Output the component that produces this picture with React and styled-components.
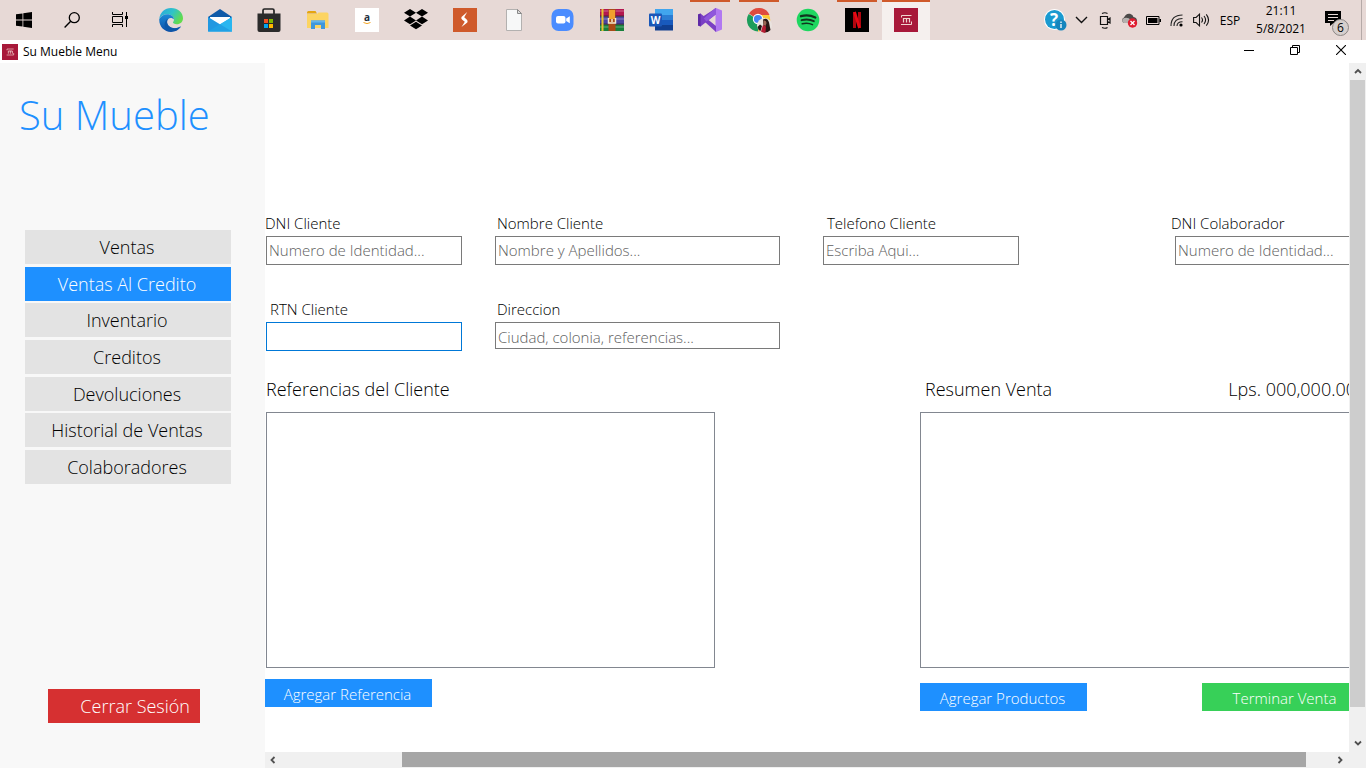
import React from 'react';
import styled, { createGlobalStyle } from 'styled-components';

const GlobalStyle = createGlobalStyle`
  *, *::before, *::after { box-sizing: border-box; }
  body {
    margin: 0;
    background: #fff;
    color: #000;
    font-family: "Open Sans", "Noto Sans", sans-serif;
  }
  button, input { font-family: inherit; }
`;

const Screen = styled.div`
  display: flex;
  flex-direction: column;
  min-height: 100vh;
  overflow: hidden;
`;

/* ---------- Taskbar ---------- */

const Taskbar = styled.header`
  display: flex;
  height: 40px;
  background: #e7d9d6;
`;

const SystemKeys = styled.div`
  display: flex;
  margin-right: 3px;
`;

const Apps = styled.nav`
  display: flex;
  gap: 1px;
`;

const barFor = {
  open: 'linear-gradient(#cf5a2b, #cf5a2b) center top / 40px 2px no-repeat',
  active: 'linear-gradient(#cf5a2b, #cf5a2b) center top / 100% 2px no-repeat, #f5f0ee',
};

const TaskButton = styled.button`
  display: flex;
  align-items: center;
  justify-content: center;
  width: 48px;
  height: 40px;
  padding: 0;
  border: 0;
  background: ${(p) => barFor[p.$state] || 'none'};
`;

const Tray = styled.div`
  display: flex;
  align-items: center;
  margin-left: auto;
`;

const TrayButton = styled.button`
  display: flex;
  align-items: center;
  justify-content: center;
  width: ${(p) => p.$width || 24}px;
  height: 40px;
  padding: 0;
  border: 0;
  background: none;
  color: #000;
  font-size: 12px;
`;

const Clock = styled.time`
  width: 68px;
  font-size: 12px;
  line-height: 18px;
  text-align: center;
`;

const Notifications = styled.button`
  position: relative;
  width: 47px;
  height: 40px;
  margin-right: 4px;
  padding: 0 0 0 10px;
  border: 0;
  border-right: 1px solid #b5aaa8;
  background: none;
  text-align: left;
`;

const Count = styled.span`
  position: absolute;
  left: 17px;
  top: 19px;
  width: 17px;
  height: 17px;
  border: 1px solid #8d8785;
  border-radius: 50%;
  background: #d6cfcd;
  color: #000;
  font-size: 12px;
  line-height: 15px;
  text-align: center;
`;

/* ---------- Window frame ---------- */

const TitleBar = styled.div`
  display: flex;
  align-items: center;
  height: 23px;
  padding: 0 2px;
  background: #fff;
`;

const WindowTitle = styled.h1`
  margin: 0 auto 0 5px;
  font-size: 12px;
  line-height: 16px;
  font-weight: 400;
`;

const WindowButton = styled.button`
  display: flex;
  align-items: center;
  justify-content: center;
  width: 46px;
  height: 19px;
  margin-bottom: 4px;
  padding: 0;
  border: 0;
  background: none;
`;

const WindowBody = styled.div`
  display: flex;
  flex: 1;
  min-width: 0;
`;

/* ---------- Sidebar ---------- */

const Sidebar = styled.aside`
  display: flex;
  flex-direction: column;
  flex: none;
  width: 265px;
  padding: 24px 34px 45px 25px;
  background: #f8f8f8;
`;

const Brand = styled.h2`
  margin: 0 0 87px -6px;
  color: #1e90ff;
  font-size: 40px;
  line-height: 56px;
  font-weight: 300;
  white-space: nowrap;
`;

const Menu = styled.nav`
  display: flex;
  flex-direction: column;
  justify-content: space-between;
  height: 254px;
`;

const MenuButton = styled.button`
  height: 34px;
  padding: 0 2px 0 0;
  border: 0;
  background: ${(p) => (p.$active ? '#1e90ff' : '#e3e3e3')};
  color: ${(p) => (p.$active ? '#fff' : '#000')};
  font-size: 18px;
  font-weight: 300;
  line-height: 34px;
`;

const LogoutButton = styled.button`
  align-self: center;
  width: 152px;
  height: 34px;
  margin-top: auto;
  margin-right: 8px;
  padding: 0 10px 0 0;
  border: 0;
  background: #d63031;
  color: #fff;
  font-size: 18px;
  font-weight: 300;
  line-height: 34px;
  text-align: right;
`;

/* ---------- Sale form ---------- */

const Pane = styled.div`
  display: flex;
  flex-direction: column;
  flex: 1;
  min-width: 0;
`;

const PaneRow = styled.div`
  display: flex;
  flex: 1;
  min-width: 0;
`;

const Viewport = styled.main`
  flex: 1;
  min-width: 0;
  padding: 149px 0 41px;
  overflow: hidden;
`;

const Form = styled.form`
  width: max-content;
`;

const FieldRow = styled.div`
  display: flex;
  height: ${(p) => p.$height}px;
`;

const Field = styled.div`
  flex: none;
  width: ${(p) => p.$width}px;
  margin-right: ${(p) => p.$gap || 0}px;
  padding-left: ${(p) => p.$inset || 0}px;
`;

const Label = styled.label`
  display: block;
  height: 24px;
  margin-left: ${(p) => p.$shift || 0}px;
  font-size: 15px;
  line-height: 23px;
  font-weight: 300;
  white-space: nowrap;
`;

const TextBox = styled.input`
  display: block;
  width: 100%;
  height: ${(p) => (p.$short ? 27 : 29)}px;
  padding: ${(p) => (p.$short ? '2px 2px 0' : '0 2px 2px')};
  border: 1px solid ${(p) => (p.$current ? '#0078d7' : '#7a7a7a')};
  border-radius: 0;
  background: #fff;
  font-size: 15px;
  font-weight: 300;
  outline: 0;
  &::placeholder { color: #606060; opacity: 1; }
`;

const Panels = styled.div`
  display: flex;
  gap: 205px;
  padding-left: 1px;
`;

const Panel = styled.section`
  width: 449px;
`;

const PanelHead = styled.div`
  display: flex;
  justify-content: space-between;
  height: 37px;
  padding: 0 ${(p) => (p.$inset ? 13 : 0)}px 0 ${(p) => (p.$inset ? 5 : 0)}px;
  font-size: 18px;
  line-height: 28px;
  font-weight: 300;
  white-space: nowrap;
`;

const PanelTitle = styled.h3`
  margin: 0;
  font: inherit;
`;

const List = styled.div`
  height: 256px;
  margin-bottom: ${(p) => p.$space}px;
  border: 1px solid #828790;
  background: #fff;
`;

const Actions = styled.div`
  display: flex;
  justify-content: space-between;
  margin-left: ${(p) => (p.$flush ? -1 : 0)}px;
`;

const ActionButton = styled.button`
  width: 167px;
  height: 28px;
  padding: 2px 2px 0 0;
  border: 0;
  background: ${(p) => (p.$done ? '#37d058' : '#1e90ff')};
  color: #fff;
  font-size: 15px;
  font-weight: 300;
  line-height: 26px;
`;

/* ---------- Scroll bars ---------- */

const ScrollV = styled.div`
  display: flex;
  flex-direction: column;
  flex: none;
  width: 17px;
  padding-left: 1px;
  background: #f0f0f0;
`;

const ScrollH = styled.div`
  display: flex;
  height: 16px;
  padding-right: 17px;
  background: #f0f0f0;
`;

const Track = styled.div`
  display: flex;
  flex: 1;
  flex-direction: ${(p) => (p.$vertical ? 'column' : 'row')};
  padding: ${(p) => (p.$vertical ? '0 1px 28px 0' : '0 26px 1px 120px')};
`;

const Thumb = styled.div`
  flex: 1;
  background: ${(p) => (p.$dark ? '#a6a6a6' : '#cdcdcd')};
`;

const ScrollButton = styled.button`
  display: flex;
  flex: none;
  align-items: center;
  justify-content: center;
  width: 17px;
  height: 17px;
  padding: 0 1px 2px 0;
  border: 0;
  background: none;
`;

/* ---------- Icons ---------- */

const Svg = ({ s = 24, w, h, children }) => (
  <svg width={w || s} height={h || s} viewBox={`0 0 ${w || s} ${h || s}`} aria-hidden="true">
    {children}
  </svg>
);

const StartIcon = () => (
  <Svg s={16}>
    <path d="M0 2.3 6.5 1.4V7.5H0zM7.3 1.3 16 0V7.5H7.3zM0 8.4H6.5V14.6L0 13.7zM7.3 8.4H16V16L7.3 14.7z" />
  </Svg>
);

const SearchIcon = () => (
  <Svg s={16}>
    <circle cx="10.3" cy="5.7" r="5" fill="none" stroke="#000" strokeWidth="1.3" />
    <path d="M6.7 9.3.6 15.4" stroke="#000" strokeWidth="1.4" />
  </Svg>
);

const TaskViewIcon = () => (
  <Svg s={16}>
    <path d="M.5 0V2.500H10.500V0M.5 15V12.500H10.500V15M.5 4.500H10.500V10.500H.5zM14.500 0V4M14.500 7V15" fill="none" stroke="#000" />
    <rect x="13" y="4" width="3" height="3" />
  </Svg>
);

const EdgeIcon = () => (
  <Svg>
    <defs>
      <linearGradient id="edgeTop" x1="0" y1="0" x2="1" y2=".5">
        <stop offset="0" stopColor="#2aa5e0" />
        <stop offset=".55" stopColor="#2fc3c8" />
        <stop offset="1" stopColor="#62dc4e" />
      </linearGradient>
      <linearGradient id="edgeBody" x1="0" y1="0" x2="0" y2="1">
        <stop offset="0" stopColor="#1b8ad8" />
        <stop offset="1" stopColor="#0c4ea6" />
      </linearGradient>
    </defs>
    <path d="M.3 11C.8 4.500 5.800 0 12 0c7 0 12 4.600 12 10.200 0 3.800-2.800 6-6.200 6-2.400 0-3.900-.8-3.900-1.600 0-.5 1.100-1.200 1.100-3.100 0-3-3-5.300-6.700-5.300C4.700 6.200 1.700 8.200.3 11z" fill="url(#edgeTop)" />
    <path d="M.3 11C2 7.700 5 6.200 8.300 6.200c3.700 0 6.700 2.300 6.700 5.300-1-1-2-1.500-3.200-1.500-2.400 0-4 2-3.700 4.600.4 3.500 4 6 8 5.700 2-.1 3.700-.8 5.200-1.700.3-.2.700.2.500.5C19.600 22.300 16 24 12 24 5 24-.3 18 .3 11z" fill="url(#edgeBody)" />
    <path d="M8.100 14.600c.4 3.500 4 6 8 5.700 2-.1 3.700-.8 5.200-1.700-3.800 5.400-10.300 5.800-13.600 3C4 18.500 5.500 12.500 9 10.800c-.8 1-1.100 2.400-.9 3.800z" fill="#0d57a8" />
  </Svg>
);

const MailIcon = () => (
  <Svg>
    <path d="M0 9 12 1l12 8v3H0z" fill="#0f5aa8" />
    <path d="M2 9h20v8H2z" fill="#fff" />
    <path d="M0 9 12 16.500 24 9v14.500H0z" fill="#2ba7ea" />
    <path d="M0 23.500 24 9v14.500z" fill="#29b6f0" />
    <path d="M0 9 24 23.500H0z" fill="#1687d8" opacity=".45" />
  </Svg>
);

const StoreIcon = () => (
  <Svg>
    <path d="M6 6V2.500A1.500 1.500 0 0 1 7.500 1h8A1.500 1.500 0 0 1 17 2.500V6" fill="none" stroke="#222" strokeWidth="1.700" />
    <path d="M.5 5.500h23V22a2 2 0 0 1-2 2h-19a2 2 0 0 1-2-2z" fill="#2b2b2b" />
    <path d="M7 11h4v4H7z" fill="#f25022" />
    <path d="M12 11h4v4h-4z" fill="#7fba00" />
    <path d="M7 16h4v4H7z" fill="#00a4ef" />
    <path d="M12 16h4v4h-4z" fill="#ffb900" />
  </Svg>
);

const FolderIcon = () => (
  <Svg>
    <path d="M1 4.500A1.500 1.500 0 0 1 2.500 3h7L11 5.500H1z" fill="#e5a50f" />
    <path d="M1 6h10l1.500-1.500H21A1.500 1.500 0 0 1 22.500 6V20H1z" fill="#fcd462" />
    <path d="M5 21v-8.500h14V21h-4v-4H9v4z" fill="#3f97dc" />
    <path d="M5 12.500h14v2H5z" fill="#64b5ec" />
  </Svg>
);

const AmazonIcon = () => (
  <Svg>
    <path d="M0 0h24v24H0z" fill="#fff" />
    <text x="12" y="13" textAnchor="middle" fontSize="10" fontWeight="700" fill="#232f3e">a</text>
    <path d="M8.500 14.500Q12 16.700 15.500 14.500" fill="none" stroke="#f5a623" strokeWidth="1" />
  </Svg>
);

const DropboxIcon = () => (
  <Svg>
    <path d="M6 1 12 4.800 6 8.600 0 4.800zM18 1 24 4.800 18 8.600 12 4.800zM6 8.600 12 12.400 6 16.200 0 12.400zM18 8.600 24 12.400 18 16.200 12 12.400zM12 13.700 18 17.500 12 21.300 6 17.500z" />
  </Svg>
);

const BoltIcon = () => (
  <Svg>
    <path d="M0 0h24v24H0z" fill="#cf5a2b" />
    <path d="M14.200 4 8.500 9q-.7 1.600.7 2.700l2.600 2L8.500 19l5.800-4.400q1-1.800-.6-3.200l-2.500-2.200z" fill="#fff" />
  </Svg>
);

const PageIcon = () => (
  <Svg>
    <path d="M4.500 1.500h11l4 4v17h-15z" fill="#f7f8f8" stroke="#b3b1b0" />
    <path d="M15.500 1.500v4h4z" fill="#ddd" stroke="#888" />
  </Svg>
);

const ZoomIcon = () => (
  <Svg>
    <rect x=".5" y="1" width="22" height="22" rx="7" fill="#4a8cff" />
    <rect x="5" y="8" width="9.500" height="7.500" rx="2" fill="#fff" />
    <path d="m15.200 10.500 3.600-2.300v7l-3.600-2.200z" fill="#fff" />
  </Svg>
);

const WinRarIcon = () => (
  <Svg>
    <path d="M0 1h24v7H0z" fill="#b3174f" />
    <path d="M0 8.500h24V16H0z" fill="#4a43a0" />
    <path d="M0 16.500h24V23H0z" fill="#17803c" />
    <path d="M0 3h24M0 11h24M0 19h24" stroke="#fff" strokeOpacity=".35" />
    <path d="M0 8.200h24M0 16.200h24" stroke="#231a2e" />
    <path d="M2.500 1v22" stroke="#e5c32e" strokeWidth="2" />
    <path d="M8.500 1h7v22h-7z" fill="#a94a16" />
    <path d="M9 2h6v9H9z" fill="#f0a12d" />
    <path d="M8.500 10v5h7v-5M12 11v3" stroke="#f4ead0" strokeWidth="1.500" fill="none" />
  </Svg>
);

const WordIcon = () => (
  <Svg>
    <path d="M6 1h18v6H6z" fill="#41a5ee" />
    <path d="M6 7h18v5H6z" fill="#2b7cd3" />
    <path d="M6 12h18v5H6z" fill="#185abd" />
    <path d="M6 17h18v5.500H6z" fill="#103f91" />
    <rect y="5.500" width="13" height="13" rx="1" fill="#1a57b8" />
    <text x="6.500" y="16" textAnchor="middle" fontSize="10" fontWeight="700" fill="#fff">W</text>
  </Svg>
);

const VisualStudioIcon = () => (
  <Svg>
    <path d="m18 0 6 2.500v19L18 24l-.5-.6V.6z" fill="#b179f1" />
    <path d="M0 6.500 2.500 5.500 18 18v6L4.500 11.800 2.700 14v-4L18 0v6.200L2.500 18.500 0 17.500z" fill="#7a3fc4" />
    <path d="M18 0v6.200L8.500 13.600 5.800 10.500 17 .2z" fill="#8f57dc" />
    <path d="M0 6.500 2.500 5.500 2.700 18.400 0 17.500z" fill="#5f2aa6" />
  </Svg>
);

const ChromeIcon = () => (
  <Svg w={26} h={26}>
    <path d="M12.500 13 3 6.600A11.500 11.500 0 0 1 23.500 8h-11z" fill="#de4b3f" />
    <path d="M12.500 13 2.700 6.900A11.500 11.500 0 0 0 12 24.500z" fill="#1c9d5b" />
    <path d="M12.500 13V8h10.600A11.500 11.500 0 0 1 12 24.500z" fill="#fcc934" />
    <circle cx="12" cy="12" r="5.200" fill="#fff" />
    <circle cx="12" cy="12" r="4.100" fill="#4285f4" />
    <circle cx="18.500" cy="18.500" r="7.500" fill="#eae3df" />
    <path d="M17 12.500q4.500-2.500 6 3l1.500 7.500q-3 3-6.500 2.500z" fill="#2a1716" />
    <path d="M17.500 13.500q3-.5 3 2.500l-1 3-2-1z" fill="#9c6655" />
    <path d="M17 18l3 1.500-.5 6q-3 .5-4.500-1z" fill="#b71c33" />
    <path d="M11.500 20l2.500-2.500 2 1.500-1.500 5q-2.500-1-3-4z" fill="#201818" />
  </Svg>
);

const SpotifyIcon = () => (
  <Svg>
    <circle cx="12" cy="12" r="11.300" fill="#1ed760" />
    <path d="M5 8.200Q12.500 6 19.300 9.500" stroke="#10351e" strokeWidth="2.300" strokeLinecap="round" fill="none" />
    <path d="M5.600 12.200Q12.300 10.400 17.800 13.200" stroke="#10351e" strokeWidth="1.900" strokeLinecap="round" fill="none" />
    <path d="M6.200 15.800Q12 14.400 16.500 16.700" stroke="#10351e" strokeWidth="1.500" strokeLinecap="round" fill="none" />
  </Svg>
);

const NetflixIcon = () => (
  <Svg>
    <path d="M0 0h24v24H0z" />
    <rect x="8" y="4" width="3" height="16" fill="#b1060f" />
    <rect x="13" y="4" width="3" height="16" fill="#b1060f" />
    <line x1="9.500" y1="4" x2="14.500" y2="20" stroke="#e50914" strokeWidth="2.800" />
  </Svg>
);

const MuebleIcon = ({ size = 24 }) => (
  <svg width={size} height={size} viewBox="0 0 24 24" aria-hidden="true">
    <path d="M0 0h24v24H0z" fill="#a8193a" />
    <path d="M7.500 9.500V7.500H17.500M7 16.500H17.500V13.500" fill="none" stroke="#f1d5cf" />
    <path d="M9.500 14.500v-4h6v4M12.500 10.500v4" fill="none" stroke="#f1d5cf" strokeWidth="1.200" />
  </svg>
);

const HelpIcon = () => (
  <Svg w={23} h={22}>
    <circle cx="10.500" cy="10.500" r="10.500" fill="#fff" />
    <circle cx="10.500" cy="10.500" r="9.500" fill="#1a9ad0" />
    <text x="10" y="16.500" textAnchor="middle" fontSize="17" fontWeight="700" fill="#fff">?</text>
    <circle cx="17" cy="16" r="5.500" fill="#1585bd" />
    <path d="M17 12.500v1.500M17 15v4" stroke="#fff" strokeWidth="1.300" />
  </Svg>
);

const ChevronIcon = () => (
  <Svg w={13} h={8}><path d="M1 1l5.500 5.500L12 1" fill="none" stroke="#111" strokeWidth="1.400" /></Svg>
);

const CameraIcon = () => (
  <Svg w={13} h={17}>
    <path d="M1.500 4.500h7v8h-7zM8.500 7.500l2.500-1.500v5L8.500 9.500M3 1.500q3-1.500 5.500 0M3 15.500q3 1.500 5.500 0" fill="none" stroke="#111" strokeWidth="1.200" />
  </Svg>
);

const CloudIcon = () => (
  <Svg w={17} h={16}>
    <path d="M3 11a3 3 0 0 1 0-5.500Q5 1 9 1.800q3 .7 3.500 3.200 3.500.5 3.500 4l-1 2z" fill="#4b4948" />
    <path d="M3 11a2.600 2.600 0 0 1 .5-5Q7 5 10 8l2 3z" fill="#b5b0ae" />
    <circle cx="11.500" cy="11" r="4.700" fill="#e01b2f" />
    <path d="m9.500 9 4 4m0-4-4 4" stroke="#fff" strokeWidth="1.300" />
  </Svg>
);

const BatteryIcon = () => (
  <Svg w={15} h={9}>
    <path d="M.5.500h12.500v8H.5z" fill="none" stroke="#000" />
    <path d="M2 2h9.500v5H2zM13.500 3H15v3h-1.500z" />
  </Svg>
);

const WifiIcon = () => (
  <Svg w={14} h={14}>
    <path d="M1 13Q1 2 12.500 2M4 13Q4 5.500 12.500 5.500M7 13Q7 8.800 12.500 8.800" fill="none" stroke="#222" strokeWidth="1.100" />
    <circle cx="11" cy="12" r="1.600" />
  </Svg>
);

const VolumeIcon = () => (
  <Svg w={17} h={14}>
    <path d="M.6 4.500h2.500L6.500 1.200v11.600L3.100 9.500H.6z" fill="none" stroke="#111" strokeWidth="1.100" />
    <path d="M8.500 4.500q2 2.500 0 5M11 3q3.200 4 0 8M13.300 1.300q4.500 5.700 0 11.400" fill="none" stroke="#111" strokeWidth="1.100" />
  </Svg>
);

const MessageIcon = () => (
  <Svg w={16} h={16}>
    <path d="M0 1h16v12H8.500L5 16V13H0z" />
    <path d="M3 4.500h10M3 7.500h10M3 10.500h6" stroke="#e7d9d6" />
  </Svg>
);

const MinimizeIcon = () => <Svg w={10} h={10}><path d="M0 5.500h10" stroke="#000" /></Svg>;

const RestoreIcon = () => (
  <Svg w={10} h={10}>
    <path d="M.5 2.500h7v7h-7zM2.500 2.500v-2h7v7h-2" fill="none" stroke="#000" />
  </Svg>
);

const CloseIcon = () => (
  <Svg w={10} h={10}><path d="m0 0 10 10M10 0 0 10" stroke="#000" strokeWidth="1.100" /></Svg>
);

const arrows = {
  up: 'M1 6 4 3l3 3',
  down: 'M1 2.500l3 3 3-3',
  left: 'M5.500 1l-3 3 3 3',
  right: 'M2.500 1l3 3-3 3',
};

const ArrowIcon = ({ to }) => (
  <Svg s={8}><path d={arrows[to]} fill="none" stroke="#505050" strokeWidth="1.800" /></Svg>
);

/* ---------- Data ---------- */

const systemKeys = [
  ['Inicio', StartIcon],
  ['Buscar', SearchIcon],
  ['Vista de tareas', TaskViewIcon],
];

const apps = [
  ['Edge', EdgeIcon],
  ['Correo', MailIcon],
  ['Store', StoreIcon],
  ['Explorador', FolderIcon],
  ['Amazon', AmazonIcon],
  ['Dropbox', DropboxIcon],
  ['Editor', BoltIcon],
  ['Documento', PageIcon],
  ['Zoom', ZoomIcon],
  ['WinRAR', WinRarIcon],
  ['Word', WordIcon],
  ['Visual Studio', VisualStudioIcon, 'open'],
  ['Chrome', ChromeIcon, 'open'],
  ['Spotify', SpotifyIcon],
  ['Netflix', NetflixIcon, 'open'],
  ['Su Mueble', MuebleIcon, 'active'],
];

const tray = [
  ['Ayuda', HelpIcon, 28],
  ['Iconos ocultos', ChevronIcon, 24],
  ['Reunirse ahora', CameraIcon, 24],
  ['OneDrive', CloudIcon, 24],
  ['Batería', BatteryIcon, 24],
  ['Red', WifiIcon, 24],
  ['Volumen', VolumeIcon, 24],
];

const menu = [
  'Ventas',
  'Ventas Al Credito',
  'Inventario',
  'Creditos',
  'Devoluciones',
  'Historial de Ventas',
  'Colaboradores',
];

const clientFields = [
  { id: 'dni', label: 'DNI Cliente', hint: 'Numero de Identidad...', width: 197, gap: 33, inset: 1, shift: -1 },
  { id: 'nombre', label: 'Nombre Cliente', hint: 'Nombre y Apellidos...', width: 285, gap: 43, shift: 2 },
  { id: 'telefono', label: 'Telefono Cliente', hint: 'Escriba Aqui...', width: 196, gap: 152, shift: 4 },
  { id: 'colaborador', label: 'DNI Colaborador', hint: 'Numero de Identidad...', width: 200, inset: 4, shift: -4 },
];

const addressFields = [
  { id: 'rtn', label: 'RTN Cliente', width: 197, gap: 33, inset: 1, shift: 4 },
  { id: 'direccion', label: 'Direccion', hint: 'Ciudad, colonia, referencias...', width: 285, shift: 2, short: true },
];

const Fields = ({ items, height, current, onFocus }) => (
  <FieldRow $height={height}>
    {items.map((f) => (
      <Field key={f.id} $width={f.width} $gap={f.gap} $inset={f.inset}>
        <Label htmlFor={f.id} $shift={f.shift}>{f.label}</Label>
        <TextBox
          id={f.id}
          type="text"
          placeholder={f.hint}
          $short={f.short}
          $current={f.id === current}
          onFocus={() => onFocus(f.id)}
        />
      </Field>
    ))}
  </FieldRow>
);

export default function App() {
  const [section, setSection] = React.useState('Ventas Al Credito');
  const [current, setCurrent] = React.useState('rtn');

  return (
    <Screen>
      <GlobalStyle />
      <Taskbar>
        <SystemKeys>
          {systemKeys.map(([name, Icon]) => (
            <TaskButton key={name} type="button" aria-label={name}><Icon /></TaskButton>
          ))}
        </SystemKeys>
        <Apps aria-label="Aplicaciones">
          {apps.map(([name, Icon, state]) => (
            <TaskButton key={name} type="button" aria-label={name} $state={state}><Icon /></TaskButton>
          ))}
        </Apps>
        <Tray>
          {tray.map(([name, Icon, width]) => (
            <TrayButton key={name} type="button" aria-label={name} $width={width}><Icon /></TrayButton>
          ))}
          <TrayButton type="button" $width={34}>ESP</TrayButton>
          <Clock>21:11<br />5/8/2021</Clock>
          <Notifications type="button" aria-label="Notificaciones">
            <MessageIcon />
            <Count>6</Count>
          </Notifications>
        </Tray>
      </Taskbar>

      <TitleBar>
        <MuebleIcon size={16} />
        <WindowTitle>Su Mueble Menu</WindowTitle>
        <WindowButton type="button" aria-label="Minimizar"><MinimizeIcon /></WindowButton>
        <WindowButton type="button" aria-label="Restaurar"><RestoreIcon /></WindowButton>
        <WindowButton type="button" aria-label="Cerrar"><CloseIcon /></WindowButton>
      </TitleBar>

      <WindowBody>
        <Sidebar>
          <Brand>Su Mueble</Brand>
          <Menu aria-label="Secciones">
            {menu.map((name) => (
              <MenuButton key={name} type="button" $active={name === section} onClick={() => setSection(name)}>
                {name}
              </MenuButton>
            ))}
          </Menu>
          <LogoutButton type="button">Cerrar Sesión</LogoutButton>
        </Sidebar>

        <Pane>
          <PaneRow>
            <Viewport>
              <Form onSubmit={(e) => e.preventDefault()}>
                <Fields items={clientFields} height={86} current={current} onFocus={setCurrent} />
                <Fields items={addressFields} height={77} current={current} onFocus={setCurrent} />
                <Panels>
                  <Panel>
                    <PanelHead><PanelTitle>Referencias del Cliente</PanelTitle></PanelHead>
                    <List $space={11} />
                    <Actions $flush>
                      <ActionButton type="button">Agregar Referencia</ActionButton>
                    </Actions>
                  </Panel>
                  <Panel>
                    <PanelHead $inset>
                      <PanelTitle>Resumen Venta</PanelTitle>
                      <span>Lps. 000,000.00</span>
                    </PanelHead>
                    <List $space={15} />
                    <Actions>
                      <ActionButton type="button">Agregar Productos</ActionButton>
                      <ActionButton type="submit" $done>Terminar Venta</ActionButton>
                    </Actions>
                  </Panel>
                </Panels>
              </Form>
            </Viewport>
            <ScrollV>
              <ScrollButton type="button" aria-label="Subir"><ArrowIcon to="up" /></ScrollButton>
              <Track $vertical><Thumb /></Track>
              <ScrollButton type="button" aria-label="Bajar"><ArrowIcon to="down" /></ScrollButton>
            </ScrollV>
          </PaneRow>
          <ScrollH>
            <ScrollButton type="button" aria-label="Izquierda"><ArrowIcon to="left" /></ScrollButton>
            <Track><Thumb $dark /></Track>
            <ScrollButton type="button" aria-label="Derecha"><ArrowIcon to="right" /></ScrollButton>
          </ScrollH>
        </Pane>
      </WindowBody>
    </Screen>
  );
}
